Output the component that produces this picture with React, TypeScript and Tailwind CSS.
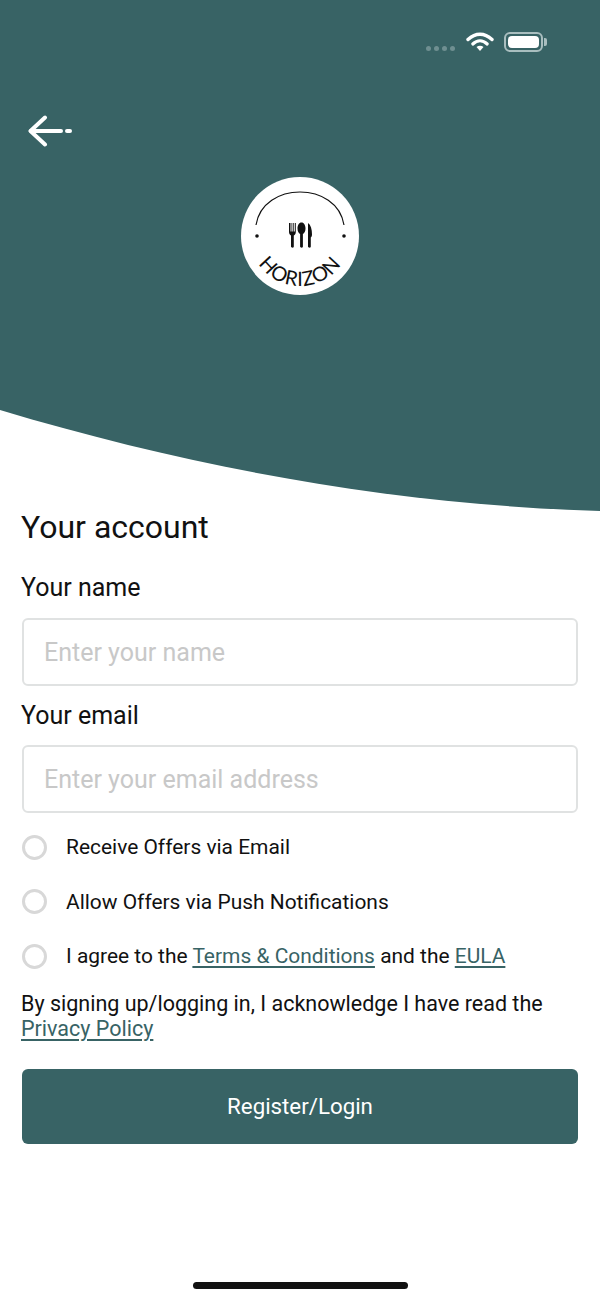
import { useState } from 'react';

const TEAL = '#386365';

function StatusIcons() {
  return (
    <div className="flex items-center justify-end h-[40px] pr-[57px] pt-[2px]">
      <div className="flex gap-[3px] mr-[11px] mt-[12px]">
        {[0, 1, 2, 3].map(i => (
          <span key={i} className="w-[5px] h-[5px] rounded-full bg-[#6f8f91]" />
        ))}
      </div>
      <svg width="28" height="20" viewBox="0 0 28 20" className="mr-[10px]">
        <path d="M2 7.500C9.500 0.500 18.500 0.500 26 7.500" fill="none" stroke="#fff" strokeWidth="3.400" strokeLinecap="round" />
        <path d="M6.800 12C11.300 7.800 16.700 7.800 21.200 12" fill="none" stroke="#fff" strokeWidth="3.200" strokeLinecap="round" />
        <path d="M10.500 15 14 19 17.500 15C15.500 13.400 12.500 13.400 10.500 15Z" fill="#fff" />
      </svg>
      <div className="relative w-[39px] h-[20px] rounded-[6px] border-2 border-[#a9bebf] p-[2px]">
        <div className="w-full h-full rounded-[4px] bg-white" />
        <span className="absolute right-[-6px] top-[4px] w-[3px] h-[8px] rounded-r-[2px] bg-[#a9bebf]" />
      </div>
    </div>
  );
}

function BackArrow() {
  return (
    <svg width="46" height="32" viewBox="0 0 46 32" fill="none" stroke="#fff" strokeWidth="4" strokeLinecap="round" strokeLinejoin="round">
      <path d="M18 2.500 3.500 16 18 29.500" />
      <path d="M4 16H34" />
      <path d="M40 16H43" />
    </svg>
  );
}

function Logo() {
  return (
    <div className="w-[118px] h-[118px] rounded-full bg-white mx-auto">
      <svg width="118" height="118" viewBox="0 0 118 118">
        <path d="M15 48C22 4 96 4 103 48" fill="none" stroke="#111" strokeWidth="1.200" />
        <circle cx="16" cy="59" r="1.800" fill="#111" />
        <circle cx="103" cy="59" r="1.800" fill="#111" />
        {/* fork */}
        <path d="M48 46v9c0 2 1 3 2 3.500V69.500c0 1.600 2.800 1.600 2.800 0V58.500c1-.5 2-1.500 2-3.500v-9h-1v8.500h-1.100V46h-1v8.500h-1.200V46h-1v8.500h-.5V46Z" fill="#111" />
        {/* spoon */}
        <path d="M60.500 45.500c2.500 0 4 2.700 4 6 0 2.800-1.200 4.700-2.600 5.400V69.500c0 1.600-2.800 1.600-2.800 0V56.900c-1.400-.7-2.600-2.600-2.600-5.400 0-3.300 1.500-6 4-6Z" fill="#111" />
        {/* knife */}
        <path d="M67 46c2.800 2 4 6 4 11.500 0 1.500-.6 2.500-1.200 3v9c0 1.600-2.800 1.600-2.800 0Z" fill="#111" />
        <defs>
          <path id="logo-arc" d="M9 59A50 50 0 0 0 109 59" />
        </defs>
        <text fontFamily="'Lato', 'Liberation Sans', sans-serif" fontWeight="400" fontSize="20" fill="#111" letterSpacing="0.800" textAnchor="middle">
          <textPath href="#logo-arc" startOffset="50%">HORIZON</textPath>
        </text>
      </svg>
    </div>
  );
}

function Radio({ children }: { children: React.ReactNode }) {
  const [on, setOn] = useState(false);
  return (
    <div className="flex items-center h-[28px]">
      <button
        type="button"
        onClick={() => setOn(!on)}
        className="w-[25px] h-[25px] shrink-0 ml-[1px] rounded-full border-[3px] border-[#d8d8d8] mr-[19px]"
      />
      <span className="text-[20.950px] leading-[28px] text-[#111]">{children}</span>
    </div>
  );
}

function TextLink({ children }: { children: React.ReactNode }) {
  return <a className="text-[#386365] underline underline-offset-[3px] decoration-[1.500px]">{children}</a>;
}

export default function App() {
  const [name, setName] = useState('');
  const [email, setEmail] = useState('');

  return (
    <div className="relative w-[600px] h-[1300px] bg-white overflow-hidden font-['Roboto',sans-serif]">
      {/* header wave */}
      <div className="relative h-[511px]">
        <svg width="600" height="511" viewBox="0 0 600 511" className="absolute inset-0">
          <path d="M0 0H600V511C400 505 200 470 0 410Z" fill={TEAL} />
        </svg>
        <div className="relative pt-[21px]">
          <StatusIcons />
          <div className="pl-[27px] pt-[54px] h-[116px]">
            <BackArrow />
          </div>
          <Logo />
        </div>
      </div>

      <div className="px-[21px]">
        <h1 className="text-[32px] leading-[36px] text-[#111] font-normal mt-[-2px]">Your account</h1>

        <label className="block text-[25px] leading-[30px] text-[#111] mt-[28px]">Your name</label>
        <input
          value={name}
          onChange={e => setName(e.target.value)}
          placeholder="Enter your name"
          className="block w-[556px] h-[68px] ml-[1px] mt-[15px] rounded-[6px] border-2 border-[#e0e2e2] px-[20px] text-[25px] outline-none placeholder:text-[#c8c8c8]"
        />

        <label className="block text-[25px] leading-[30px] text-[#111] mt-[15px]">Your email</label>
        <input
          value={email}
          onChange={e => setEmail(e.target.value)}
          placeholder="Enter your email address"
          className="block w-[556px] h-[68px] ml-[1px] mt-[14px] rounded-[6px] border-2 border-[#e0e2e2] px-[20px] text-[25px] outline-none placeholder:text-[#c8c8c8]"
        />

        <div className="flex flex-col gap-[26.500px] mt-[20px]">
          <Radio>Receive Offers via Email</Radio>
          <Radio>Allow Offers via Push Notifications</Radio>
          <Radio>
            I agree to the <TextLink>Terms &amp; Conditions</TextLink> and the <TextLink>EULA</TextLink>
          </Radio>
        </div>

        <p className="text-[21.500px] leading-[25px] text-[#111] mt-[21px]">
          By signing up/logging in, I acknowledge I have read the <TextLink>Privacy Policy</TextLink>
        </p>

        <button
          type="button"
          className="block w-[556px] h-[75px] ml-[1px] mt-[28px] rounded-[6px] bg-[#386365] text-white text-[22.300px]"
        >
          Register/Login
        </button>
      </div>

      {/* home indicator */}
      <div className="absolute left-[193px] bottom-[11px] w-[215px] h-[7px] rounded-full bg-[#111]" />
    </div>
  );
}
